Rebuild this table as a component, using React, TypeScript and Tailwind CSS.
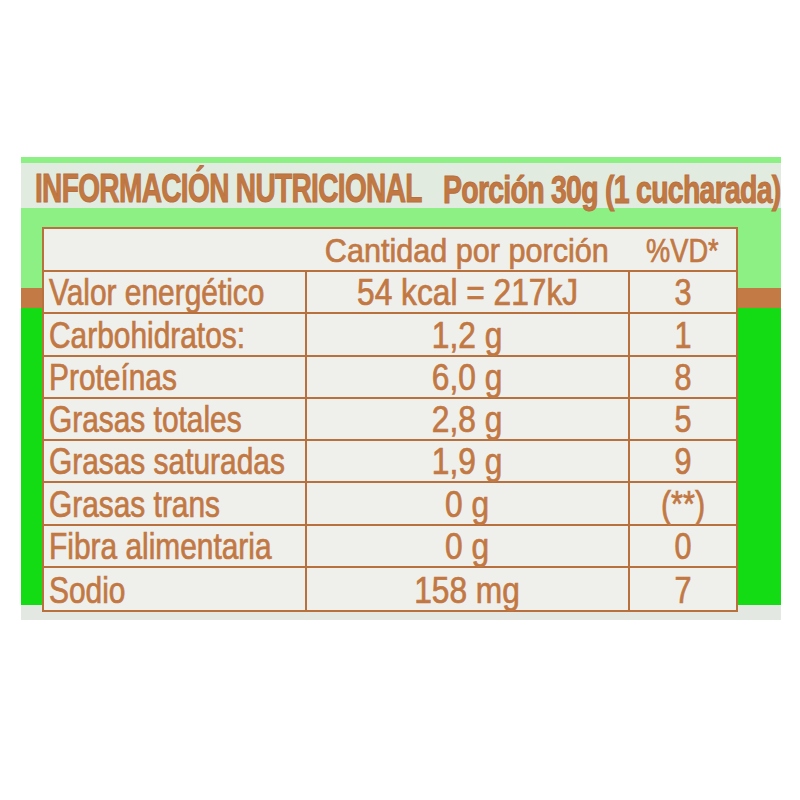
const rows: { name: string; value: string; vd: string }[] = [
  { name: 'Valor energético', value: '54 kcal = 217kJ', vd: '3' },
  { name: 'Carbohidratos:', value: '1,2 g', vd: '1' },
  { name: 'Proteínas', value: '6,0 g', vd: '8' },
  { name: 'Grasas totales', value: '2,8 g', vd: '5' },
  { name: 'Grasas saturadas', value: '1,9 g', vd: '9' },
  { name: 'Grasas trans', value: '0 g', vd: '(**)' },
  { name: 'Fibra alimentaria', value: '0 g', vd: '0' },
  { name: 'Sodio', value: '158 mg', vd: '7' },
];

const font = "font-['Liberation_Sans',Arial,sans-serif]";
const line = 'border-[#b8703c]';

export default function App() {
  return (
    <div className="w-[800px] h-[800px] overflow-hidden bg-white pt-[157px] pl-[21px]">
      <div
        className={`w-[760px] h-[463px] ${font} bg-[linear-gradient(to_bottom,#8cf085_0,#8cf085_6px,#e2ebe0_6px,#e2ebe0_51px,#8cf085_51px,#8cf085_131px,#c47a45_131px,#c47a45_151px,#14dc14_151px,#14dc14_448px,#e3e8e3_448px)]`}
      >
        {/* title */}
        <div className="flex items-end gap-[21px] pl-[14px] pt-[9px] h-[52px] text-[#c27843] font-bold tracking-[-1px] leading-none whitespace-nowrap [-webkit-text-stroke:1px_#b8703c]">
          <span className="inline-block origin-left scale-x-[0.685] mr-[-178px] text-[41px]">INFORMACIÓN NUTRICIONAL</span>
          <span className="inline-block origin-left scale-x-[0.75] mr-[-113px] text-[38px]">Porción 30g (1 cucharada)</span>
        </div>

        {/* table */}
        <div
          className={`ml-[21px] mt-[18px] w-[696px] border-2 ${line} bg-[#efefeb] text-[#c27843] leading-none whitespace-nowrap [-webkit-text-stroke:0.7px_#c27843]`}
        >
          <div className={`grid grid-cols-[261px_323px_108px] h-[43px] border-b-2 ${line}`}>
            <div />
            <div className="flex items-end justify-center pb-[3px] text-[34px]">
              <span className="inline-block scale-x-[0.9]">Cantidad por porción</span>
            </div>
            <div className="flex items-end justify-center pb-[3px] text-[34px]">
              <span className="inline-block scale-x-[0.8]">%VD*</span>
            </div>
          </div>
          {rows.map((r, i) => (
            <div
              key={r.name}
              className={`grid grid-cols-[261px_323px_108px] h-[42.3px] ${i < rows.length - 1 ? `border-b-2 ${line}` : ''}`}
            >
              <div className="flex items-end overflow-hidden pl-[5px] pb-[1px] text-[36px]">
                <span className="inline-block origin-left scale-x-[0.83]">{r.name}</span>
              </div>
              <div className={`flex items-end justify-center pb-[1px] text-[36px] border-l-2 ${line}`}>
                <span className="inline-block scale-x-[0.88]">{r.value}</span>
              </div>
              <div className={`flex items-end justify-center pb-[1px] text-[36px] border-l-2 ${line}`}>
                <span className="inline-block scale-x-[0.85]">{r.vd}</span>
              </div>
            </div>
          ))}
        </div>
      </div>
    </div>
  );
}
